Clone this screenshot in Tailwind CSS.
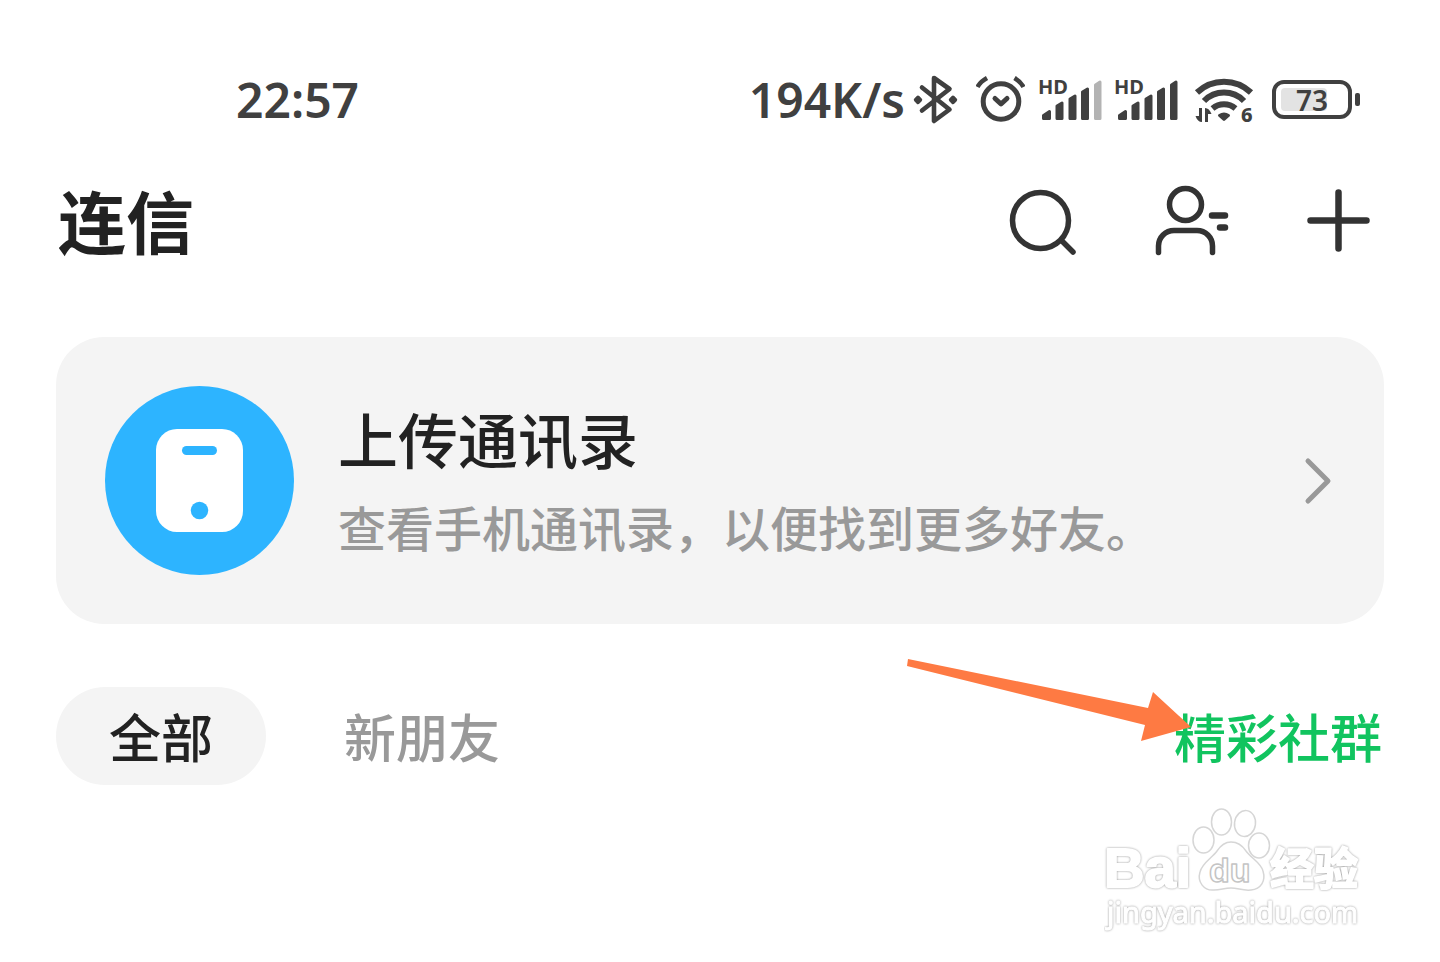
<!DOCTYPE html>
<html lang="zh-CN">

<head>
    <meta charset="UTF-8">
    <meta name="viewport" content="width=device-width, initial-scale=1.0">
    <title>连信</title>
    <script src="https://cdn.jsdelivr.net/npm/@tailwindcss/browser@4"></script>
</head>

<body class="bg-white px-14 font-['Noto_Sans','Noto_Sans_CJK_SC',sans-serif] text-[#222]">
    <!-- Status bar -->
    <div class="mt-[72px] flex h-14 items-center justify-between pl-[180px] pr-6 text-[48px] leading-none font-semibold text-[#404040]">
        <span>22:57</span>
        <div class="flex items-center gap-2">
            <span>194K/s</span>
            <div class="flex items-center gap-3.5">
                <!-- Bluetooth -->
                <svg class="h-[50px] w-[49px]" viewBox="0 0 49 50" fill="none" stroke="currentColor" stroke-width="4.6" stroke-linecap="round" stroke-linejoin="round">
                    <path d="M9 12.5L36.500 34.500 21 46V3l15.500 11L9 35.500" />
                    <path d="M5 22.500l2.200 2.400L5 27.200l-2.200-2.300zM40 22.500l2.200 2.400-2.200 2.300-2.200-2.300z" fill="currentColor" stroke-width="4" />
                </svg>
                <!-- Alarm -->
                <svg class="h-[50px] w-[49px]" viewBox="0 0 49 50" fill="none" stroke="currentColor" stroke-width="5" stroke-linecap="round" stroke-linejoin="round">
                    <circle cx="25" cy="26.500" r="17.800" />
                    <path d="M19 23.500l6 5.500 6-5.500" />
                    <path d="M1.500 12Q4.500 6.500 11 3M38.500 3q6 3.500 9 9" stroke-width="4.600" stroke-linecap="butt" />
                </svg>
                <!-- Signal 1 -->
                <svg class="h-[50px] w-[62px] overflow-visible" viewBox="0 0 62 50" fill="currentColor" stroke="currentColor" stroke-width="3" stroke-linejoin="round">
                    <text x="-1" y="19" font-size="20" font-weight="700" stroke="none">HD</text>
                    <path d="M4.500 43.500v-3l6-4v7zM18 43.500V31l5-3v15.500zM31 43.500V24l5-3v22.500zM43.500 43.500V17l5-3v29.500z" />
                    <path d="M56.500 43.500V10l4.500-3v36.500z" fill="#b3b3b3" stroke="#b3b3b3" />
                </svg>
                <!-- Signal 2 -->
                <svg class="h-[50px] w-[66px] overflow-visible" viewBox="0 0 66 50" fill="currentColor" stroke="currentColor" stroke-width="3" stroke-linejoin="round">
                    <text x="-1" y="19" font-size="20" font-weight="700" stroke="none">HD</text>
                    <path d="M4.500 43.500v-3l6-4v7zM18 43.500V31l5-3v15.500zM31 43.500V24l5-3v22.500zM43.500 43.500V17l5-3v29.500zM56.500 43.500V10l4.500-3v36.500z" />
                </svg>
                <!-- Wi-Fi -->
                <svg class="h-[50px] w-[63px] overflow-visible" viewBox="0 0 63 50" fill="none" stroke="currentColor" stroke-width="6">
                    <path d="M2 17.500A39 39 0 0 1 56 17.500" />
                    <path d="M9 26A28 28 0 0 1 49 26" />
                    <path d="M17.500 33.500A18 18 0 0 1 40.500 33.500" />
                    <path d="M24.500 40.500q4.500-3 9 0l-4.500 4z" fill="currentColor" stroke-width="3" stroke-linejoin="round" />
                    <path d="M7 33v14c-3 0-5-2-6.500-6H4v-8zM10 47V33c3 0 5 2 6.500 6H13v8z" fill="currentColor" stroke="none" />
                    <text x="46" y="47" font-size="20" font-weight="800" fill="currentColor" stroke="none">6</text>
                </svg>
                <!-- Battery -->
                <svg class="h-[50px] w-[88px]" viewBox="0 0 88 50">
                    <rect x="2" y="7" width="76" height="35" rx="10" fill="none" stroke="currentColor" stroke-width="4" />
                    <rect x="9" y="13" width="46" height="23" rx="4" fill="#e3e3e3" />
                    <rect x="83" y="18" width="5" height="13" rx="2" fill="currentColor" />
                    <text x="24" y="36" font-size="28" font-weight="600" fill="currentColor">73</text>
                </svg>
            </div>
        </div>
    </div>

    <!-- Header -->
    <header class="mt-[45px] flex h-24 items-center justify-between pl-0.5 pr-1.5">
        <h1 class="pt-1 text-[68px] leading-none font-bold">连信</h1>
        <div class="flex gap-[68px] text-[#333]">
            <button type="button" aria-label="搜索">
                <svg class="size-20" viewBox="0 0 80 80" fill="none" stroke="currentColor" stroke-width="5.500" stroke-linecap="round">
                    <circle cx="38.500" cy="39.500" r="28" />
                    <path d="M60 60l11 11" />
                </svg>
            </button>
            <button type="button" aria-label="通讯录">
                <svg class="size-20" viewBox="0 0 80 80" fill="none" stroke="currentColor" stroke-width="5.500" stroke-linecap="round">
                    <circle cx="35.500" cy="23.500" r="16" />
                    <path d="M8.500 71.500V65A15.500 15.500 0 0 1 24 49.500h23A15.500 15.500 0 0 1 62.500 65v6.500" />
                    <path d="M62 34.500h13M70 46.500h5" stroke-width="6.500" />
                </svg>
            </button>
            <button type="button" aria-label="添加">
                <svg class="size-20" viewBox="0 0 80 80" fill="none" stroke="currentColor" stroke-width="6.500" stroke-linecap="round">
                    <path d="M40.500 11.500v56M12.500 39.500h56" />
                </svg>
            </button>
        </div>
    </header>

    <main>
        <!-- Upload contacts card -->
        <a href="#" class="mt-[68px] flex items-center rounded-[48px] bg-[#f4f4f4] py-[49px] pl-[49px] pr-12">
            <svg class="size-[189px] shrink-0" viewBox="0 0 189 189">
                <circle cx="94.500" cy="94.500" r="94.500" fill="#2db4ff" />
                <rect x="51" y="43" width="87" height="103" rx="21" fill="#fff" />
                <rect x="77" y="60" width="35" height="9" rx="4.500" fill="#2db4ff" />
                <circle cx="94.500" cy="124.500" r="8.700" fill="#2db4ff" />
            </svg>
            <div class="ml-11 flex-1 pt-2">
                <h2 class="text-[60px] leading-[80px] font-medium">上传通讯录</h2>
                <p class="mt-2 text-[48px] leading-[80px] font-medium text-[#999]">查看手机通讯录，以便找到更多好友。</p>
            </div>
            <svg class="h-12 w-8 shrink-0" viewBox="0 0 32 48" fill="none" stroke="#999" stroke-width="5" stroke-linecap="round" stroke-linejoin="round">
                <path d="M4 4l20 20L4 44" />
            </svg>
        </a>

        <!-- Tabs -->
        <nav class="relative mt-[63px] flex items-center text-[52px] leading-none font-medium">
            <button type="button" class="h-[98px] w-[210px] rounded-full bg-[#f4f4f4] pt-1">全部</button>
            <button type="button" class="ml-[78px] pt-1 text-[#999]">新朋友</button>
            <a href="#" class="ml-auto pt-1 pr-0.5 text-[#11c45f]">精彩社群</a>
            <svg class="absolute right-[192px] -top-[30px] h-[86px] w-[286px]" viewBox="0 0 286 86" fill="#fe7a43">
                <path d="M2 2l240 49 5-16 38 35-50 14 4-16L1 9z" />
            </svg>
        </nav>
    </main>

    <!-- Watermark -->
    <footer class="mt-5 flex justify-end pr-4">
        <svg class="h-[132px] w-[264px]" viewBox="0 0 264 132" fill="#fff" stroke="#fff" stroke-width="2" stroke-linejoin="round">
            <g class="drop-shadow-[0_0_1px_rgba(0,0,0,0.4)]">
                <text x="0" y="82" font-family="Liberation Sans, sans-serif" font-size="56" font-weight="700">Bai</text>
                <text x="166" y="80" font-family="Noto Sans CJK SC, sans-serif" font-size="44" font-weight="700">经验</text>
                <text x="3" y="118" font-size="29" stroke-width="1">jingyan.baidu.com</text>
            </g>
            <g stroke="#d6d6d6" stroke-width="1.500">
                <ellipse cx="99.500" cy="35" rx="10.500" ry="13" />
                <ellipse cx="117.500" cy="17" rx="10" ry="13" />
                <ellipse cx="141" cy="18.500" rx="10.500" ry="13" transform="rotate(8 141 18.500)" />
                <ellipse cx="155" cy="40.500" rx="10.500" ry="12.500" />
                <path d="M127 37c-6 0-10 3-14 9-5 7-15 12-17 21-3 10 4 19 14 18 7 0 10-2 17-2s12 3 20 2c10-1 15-9 12-19-2-8-12-13-17-20-4-6-8-9-15-9z" />
                <text x="105" y="77" font-family="Liberation Sans, sans-serif" font-size="34" font-weight="700" stroke="#c4c4c4">du</text>
            </g>
        </svg>
    </footer>
</body>

</html>
